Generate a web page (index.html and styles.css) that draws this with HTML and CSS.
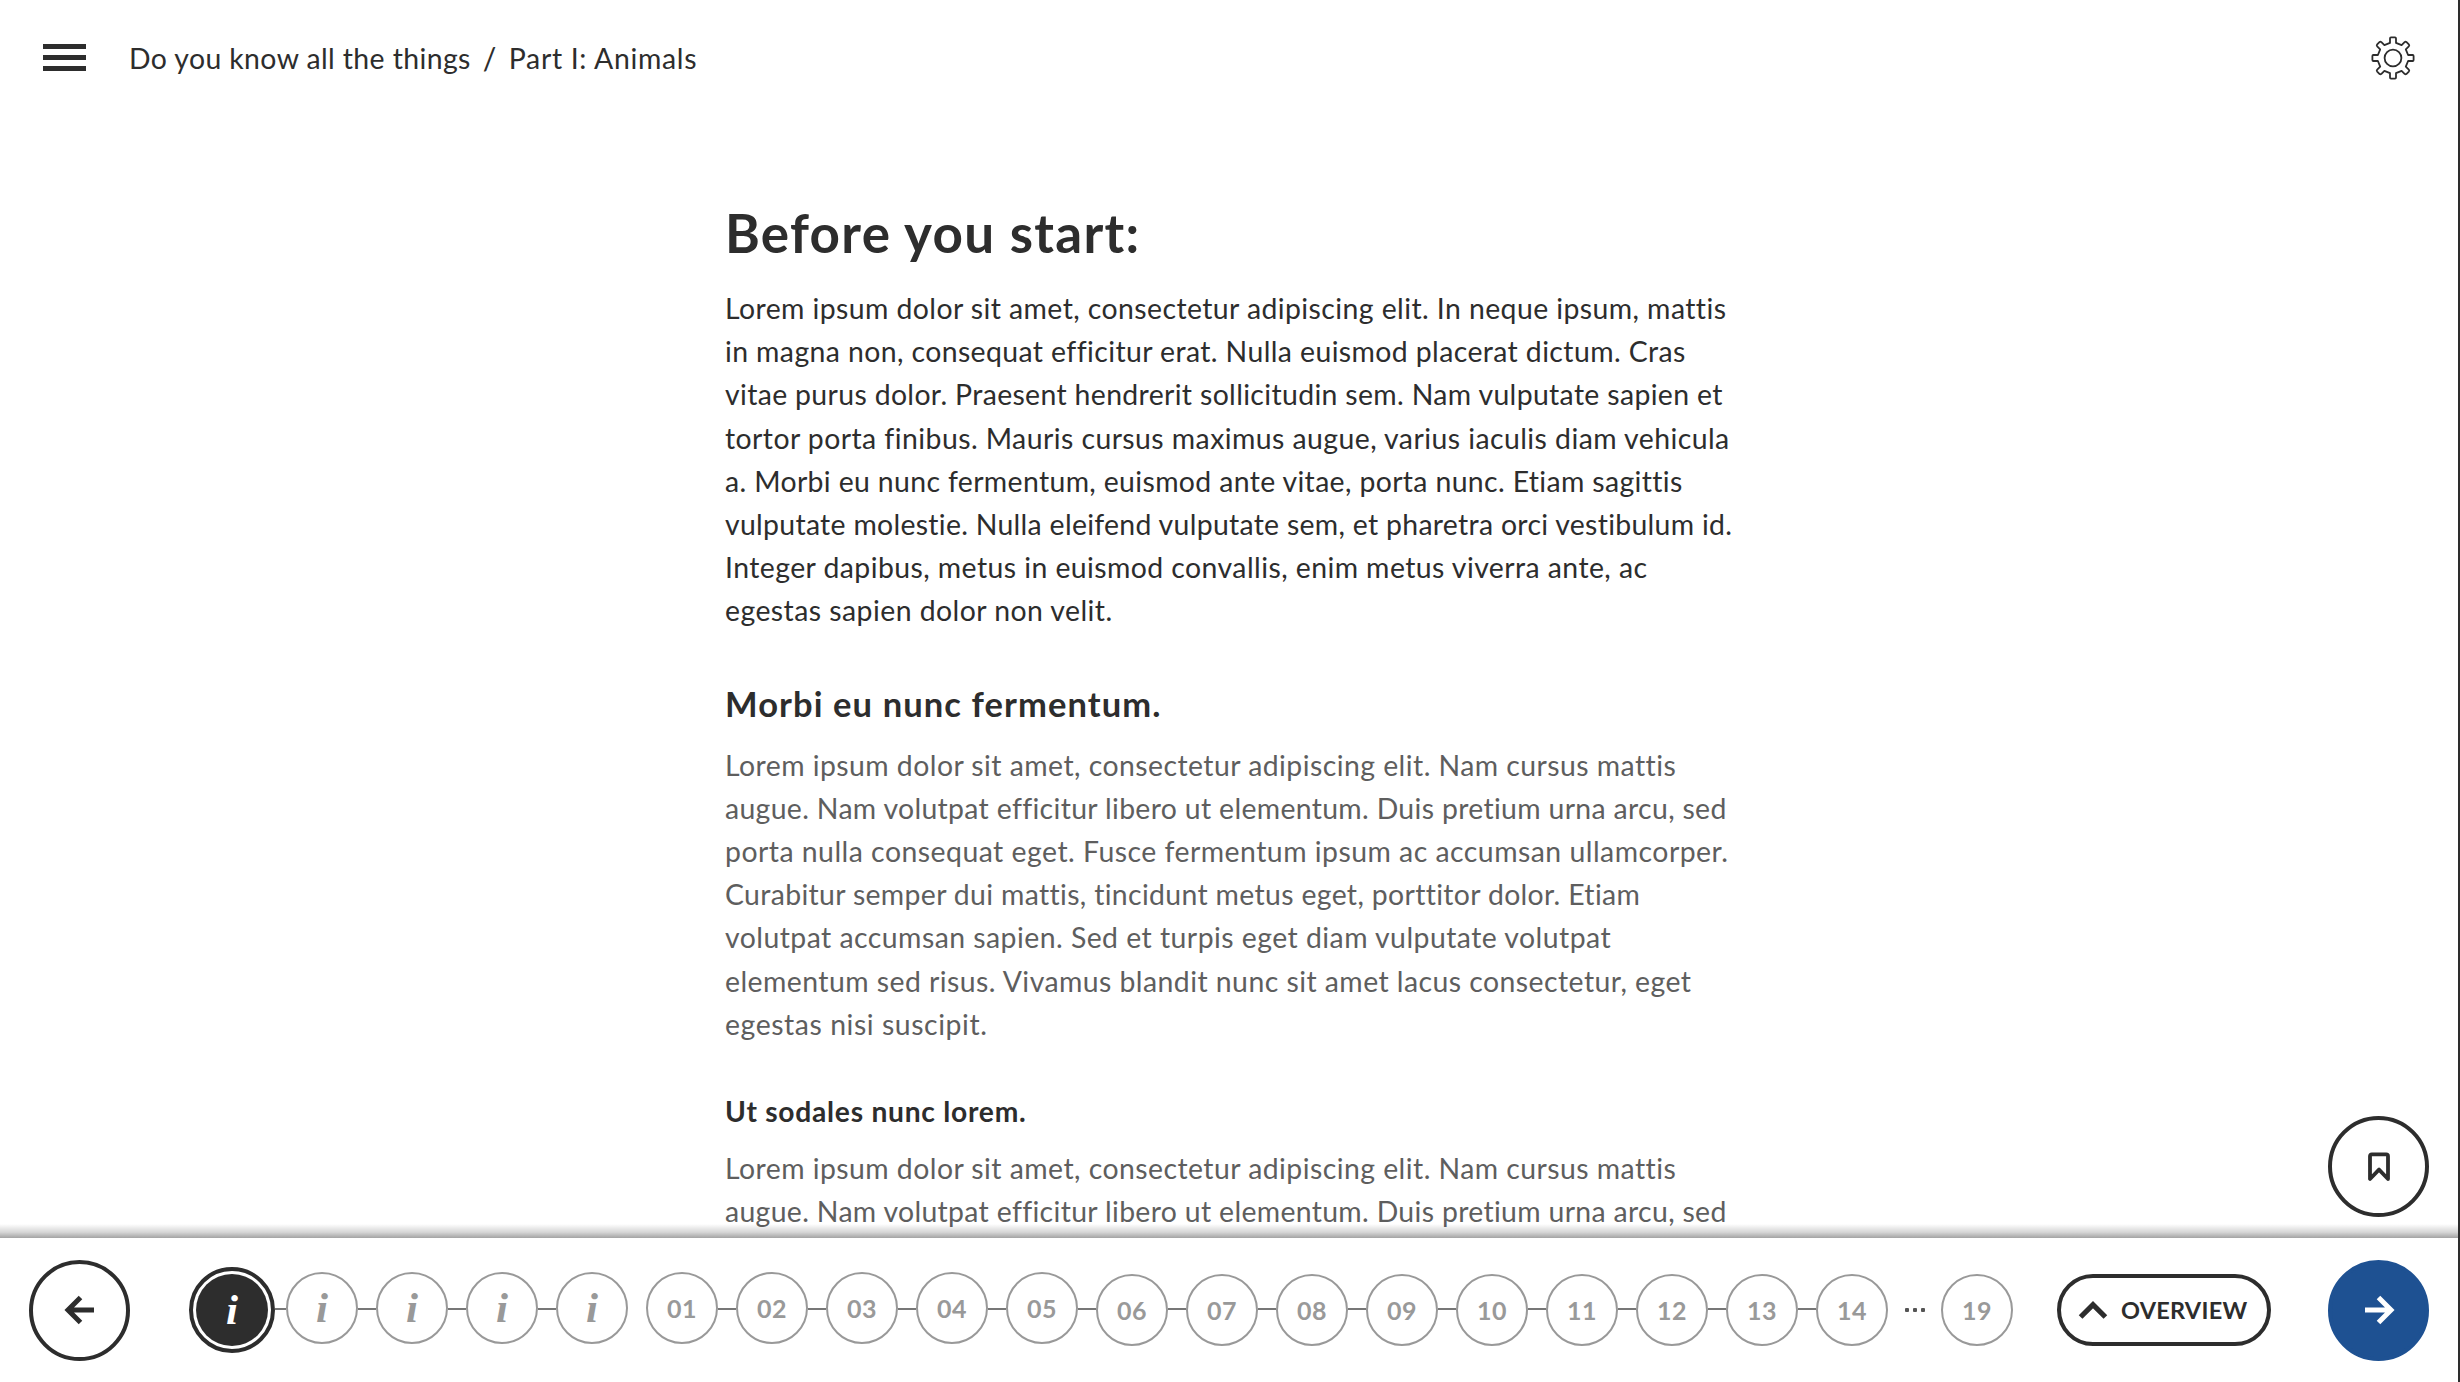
FILE: index.html
```html
<!DOCTYPE html>
<html lang="en">
<head>
<meta charset="utf-8">
<title>Part I: Animals</title>
<link rel="stylesheet" href="styles.css">
</head>
<body>
<div class="app">
  <header class="topbar">
    <button class="menu" aria-label="Menu"><span></span><span></span><span></span></button>
    <nav class="crumbs"><span class="crumb">Do you know all the things</span><span class="sep">/</span><span class="crumb current">Part I: Animals</span></nav>
    <button class="settings" aria-label="Settings">
      <svg width="46" height="46" viewBox="-23 -23 46 46" fill="none" stroke="#2d2d2d" stroke-width="1.8" stroke-linejoin="round">
        <circle r="8.4"/>
        <path d="M-3 -15.1V-19.6Q-3 -20.6 -2 -20.6H2Q3 -20.6 3 -19.6V-15.1L8.6 -12.8L11.6 -15.8Q12.6 -16.7 13.6 -15.8L15.8 -13.6Q16.7 -12.6 15.8 -11.6L12.8 -8.6L15.1 -3H19.6Q20.6 -3 20.6 -2V2Q20.6 3 19.6 3H15.1L12.8 8.6L15.8 11.6Q16.7 12.6 15.8 13.6L13.6 15.8Q12.6 16.7 11.6 15.8L8.6 12.8L3 15.1V19.6Q3 20.6 2 20.6H-2Q-3 20.6 -3 19.6V15.1L-8.6 12.8L-11.6 15.8Q-12.6 16.7 -13.6 15.8L-15.8 13.6Q-16.7 12.6 -15.8 11.6L-12.8 8.6L-15.1 3H-19.6Q-20.6 3 -20.6 2V-2Q-20.6 -3 -19.6 -3H-15.1L-12.8 -8.6L-15.8 -11.6Q-16.7 -12.6 -15.8 -13.6L-13.6 -15.8Q-12.6 -16.7 -11.6 -15.8L-8.6 -12.8Z"/>
      </svg>
    </button>
  </header>

  <main class="content">
    <article class="article">
      <h1>Before you start:</h1>
      <p class="lead">
        <span>Lorem ipsum dolor sit amet, consectetur adipiscing elit. In neque ipsum, mattis</span>
        <span>in magna non, consequat efficitur erat. Nulla euismod placerat dictum. Cras</span>
        <span>vitae purus dolor. Praesent hendrerit sollicitudin sem. Nam vulputate sapien et</span>
        <span>tortor porta finibus. Mauris cursus maximus augue, varius iaculis diam vehicula</span>
        <span>a. Morbi eu nunc fermentum, euismod ante vitae, porta nunc. Etiam sagittis</span>
        <span>vulputate molestie. Nulla eleifend vulputate sem, et pharetra orci vestibulum id.</span>
        <span>Integer dapibus, metus in euismod convallis, enim metus viverra ante, ac</span>
        <span>egestas sapien dolor non velit.</span>
      </p>
      <h2>Morbi eu nunc fermentum.</h2>
      <p class="text">
        <span>Lorem ipsum dolor sit amet, consectetur adipiscing elit. Nam cursus mattis</span>
        <span>augue. Nam volutpat efficitur libero ut elementum. Duis pretium urna arcu, sed</span>
        <span>porta nulla consequat eget. Fusce fermentum ipsum ac accumsan ullamcorper.</span>
        <span>Curabitur semper dui mattis, tincidunt metus eget, porttitor dolor. Etiam</span>
        <span>volutpat accumsan sapien. Sed et turpis eget diam vulputate volutpat</span>
        <span>elementum sed risus. Vivamus blandit nunc sit amet lacus consectetur, eget</span>
        <span>egestas nisi suscipit.</span>
      </p>
      <h3>Ut sodales nunc lorem.</h3>
      <p class="text">
        <span>Lorem ipsum dolor sit amet, consectetur adipiscing elit. Nam cursus mattis</span>
        <span>augue. Nam volutpat efficitur libero ut elementum. Duis pretium urna arcu, sed</span>
      </p>
    </article>
  </main>

  <footer class="bottombar">
    <button class="round prev" aria-label="Previous">
      <svg width="32" height="32" viewBox="0 0 32 32" fill="none" stroke="#2d2d2d" stroke-width="5"><path d="M30 16H5M16.5 3.5L4 16L16.5 28.5"/></svg>
    </button>
    <nav class="steps">
      <span class="step info active"><b>i</b></span><i class="link first"></i>
      <span class="step info">i</span><i class="link"></i>
      <span class="step info">i</span><i class="link"></i>
      <span class="step info">i</span><i class="link"></i>
      <span class="step info">i</span><i class="link none"></i>
      <span class="step">01</span><i class="link"></i>
      <span class="step">02</span><i class="link"></i>
      <span class="step">03</span><i class="link"></i>
      <span class="step">04</span><i class="link"></i>
      <span class="step">05</span><i class="link"></i>
      <span class="step low">06</span><i class="link"></i>
      <span class="step low">07</span><i class="link"></i>
      <span class="step low">08</span><i class="link"></i>
      <span class="step low">09</span><i class="link"></i>
      <span class="step low">10</span><i class="link"></i>
      <span class="step low">11</span><i class="link"></i>
      <span class="step low">12</span><i class="link"></i>
      <span class="step low">13</span><i class="link"></i>
      <span class="step low">14</span>
      <span class="more"><i></i><i></i><i></i></span>
      <span class="step low">19</span>
    </nav>
    <button class="overview">
      <svg width="30" height="20" viewBox="0 0 30 20" fill="none" stroke="#2d2d2d" stroke-width="5.2"><path d="M2.6 17L15 4.6L27.4 17"/></svg>
      <span>OVERVIEW</span>
    </button>
    <button class="round next" aria-label="Next">
      <svg width="32" height="32" viewBox="0 0 32 32" fill="none" stroke="#fff" stroke-width="5"><path d="M2 16H27M15.5 3.5L28 16L15.5 28.5"/></svg>
    </button>
  </footer>

  <button class="round bookmark" aria-label="Bookmark">
    <svg width="24" height="30" viewBox="0 0 24 30" fill="none" stroke="#2d2d2d" stroke-width="3.8" stroke-linejoin="round"><path d="M3 27V4.2Q3 2.4 4.8 2.4H19.2Q21 2.4 21 4.2V27L12 17.6Z"/></svg>
  </button>
</div>
</body>
</html>
```
FILE: styles.css
```css
* { box-sizing: border-box; }
body { margin: 0; background: #fff; color: #2d2d2d; font-family: "Lato", sans-serif; }
button { margin: 0; padding: 0; border: 0; background: none; color: inherit; font: inherit; }
svg { display: block; }

.app {
  position: relative;
  display: flex;
  flex-direction: column;
  width: 2460px;
  height: 1382px;
  overflow: hidden;
  border-right: 2px solid #2d2d2d;
}

.topbar { flex: none; display: flex; align-items: center; height: 115px; padding: 0 42px 0 43px; }
.menu { display: flex; flex-direction: column; gap: 6px; width: 43px; }
.menu span { height: 5px; background: #2d2d2d; }
.crumbs { display: flex; align-items: center; margin-left: 43px; padding-top: 2px; font-size: 28.4px; line-height: 43px; letter-spacing: .4px; white-space: nowrap; }
.sep { width: 38px; text-align: center; font-size: 30px; }
.current { letter-spacing: .68px; }
.settings { margin-left: auto; }

.content { flex: 1; min-height: 0; overflow: hidden; padding: 86px 0 0 725px; }
.article { width: 1020px; }
h1, h2, h3, p { margin: 0; }
h1 { font-size: 53px; line-height: 64px; letter-spacing: 1.3px; margin-bottom: 22px; }
h2 { font-size: 34.5px; line-height: 42px; letter-spacing: 1.1px; margin: 50px 0 19px; }
h3 { font-size: 28.2px; line-height: 36px; letter-spacing: .75px; margin: 47px 0 18px; }
p { font-size: 28.4px; line-height: 43.2px; letter-spacing: .4px; }
p span { display: block; white-space: nowrap; }
.text { color: #5e5e5e; }

/* optical tracking per line */
.lead span:nth-child(1) { letter-spacing: .42px; }
.lead span:nth-child(2) { letter-spacing: .4px; }
.lead span:nth-child(3) { letter-spacing: .35px; }
.lead span:nth-child(4) { letter-spacing: .44px; }
.lead span:nth-child(5) { letter-spacing: .36px; }
.lead span:nth-child(6) { letter-spacing: .3px; }
.lead span:nth-child(7) { letter-spacing: .43px; }
.lead span:nth-child(8) { letter-spacing: .45px; }
.text span:nth-child(1) { letter-spacing: .45px; }
.text span:nth-child(2) { letter-spacing: .33px; }
.text span:nth-child(3) { letter-spacing: .48px; }
.text span:nth-child(4) { letter-spacing: .34px; }
.text span:nth-child(5) { letter-spacing: .46px; }
.text span:nth-child(6) { letter-spacing: .45px; }
.text span:nth-child(7) { letter-spacing: .56px; }

.bottombar {
  position: relative;
  flex: none;
  display: flex;
  align-items: center;
  height: 144px;
  padding: 0 29px;
  background: #fff;
}
.bottombar::before {
  content: "";
  position: absolute;
  left: 0;
  right: 0;
  bottom: 100%;
  height: 14px;
  background: linear-gradient(rgba(0,0,0,0), rgba(0,0,0,.17) 60%, rgba(0,0,0,.36));
}

.round { flex: none; display: flex; align-items: center; justify-content: center; width: 101px; height: 101px; border-radius: 50%; border: 4px solid #2d2d2d; background: #fff; }
.next { margin-left: 57px; border-color: #1e5192; background: #1e5192; }
.bookmark { position: absolute; left: 2328px; top: 1116px; }

.steps { display: flex; align-items: center; margin-left: 59px; }
.step { flex: none; display: flex; align-items: center; justify-content: center; width: 72px; height: 72px; margin-top: -4px; border: 2px solid #999; border-radius: 50%; color: #999; font-size: 25px; font-weight: 700; letter-spacing: .6px; line-height: 30px; }
.low { margin-top: 0; }
.info { font: italic bold 43px/40px "Liberation Serif", serif; letter-spacing: 0; }
.active { width: 86px; height: 86px; margin-top: 0; padding: 3px; border: 4px solid #2d2d2d; }
.active b { display: flex; align-items: center; justify-content: center; width: 72px; height: 72px; border-radius: 50%; background: #2d2d2d; color: #fff; }
.link { flex: none; width: 18px; height: 2px; margin-top: -2px; background: #777; }
.link.first { width: 11px; }
.link.none { background: none; }
.more { display: flex; gap: 4px; width: 53px; justify-content: center; }
.more i { width: 4px; height: 4px; border-radius: 1px; background: #555; }

.overview { flex: none; display: flex; align-items: center; width: 214px; height: 72px; margin-left: 44px; padding-left: 17px; border: 4px solid #2d2d2d; border-radius: 36px; font-size: 23.5px; font-weight: 700; letter-spacing: .25px; }
.overview span { margin-left: 13px; }
```
